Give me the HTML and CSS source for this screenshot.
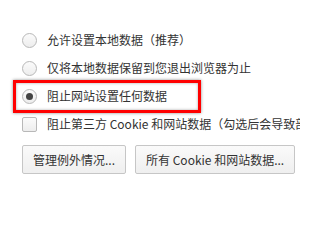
FILE: index.html
```html
<!DOCTYPE html>
<html lang="zh-CN">
<head>
<meta charset="utf-8">
<link rel="stylesheet" href="styles.css">
</head>
<body>
<div class="panel">
  <div class="row"><span class="radio"></span><span class="label">允许设置本地数据（推荐）</span></div>
  <div class="row"><span class="radio"></span><span class="label">仅将本地数据保留到您退出浏览器为止</span></div>
  <div class="row highlighted"><span class="radio checked"></span><span class="label">阻止网站设置任何数据</span><span class="marker"></span></div>
  <div class="row clip"><span class="checkbox"></span><span class="label">阻止第三方 Cookie 和网站数据（勾选后会导致部分网站无法正常使用）</span></div>
  <div class="buttons">
    <button class="btn">管理例外情况...</button>
    <button class="btn">所有 Cookie 和网站数据...</button>
  </div>
</div>
</body>
</html>
```
FILE: styles.css
```css
html, body {
  margin: 0;
  padding: 0;
  background: #ffffff;
  width: 300px;
  height: 200px;
  overflow: hidden;
}
.panel {
  width: 300px;
  box-sizing: border-box;
  overflow: hidden;
  padding: 26px 0 0 22px;
  font-family: "Noto Sans CJK SC", "Noto Sans", sans-serif;
  font-size: 12px;
  color: #333333;
}
.row {
  position: relative;
  display: flex;
  align-items: center;
  height: 28px;
  gap: 10px;
  white-space: nowrap;
}
.row.clip {
  overflow: hidden;
}
.label {
  line-height: 16px;
}
.radio {
  flex: none;
  box-sizing: border-box;
  width: 15px;
  height: 15px;
  border: 1px solid #b8b8b8;
  border-radius: 50%;
  background: linear-gradient(#fbfbfb, #ededed);
  display: flex;
  align-items: center;
  justify-content: center;
}
.radio.checked::after {
  content: "";
  width: 7px;
  height: 7px;
  border-radius: 50%;
  background: #444444;
}
.checkbox {
  flex: none;
  box-sizing: border-box;
  width: 15px;
  height: 15px;
  border: 1px solid #b8b8b8;
  border-radius: 2px;
  background: linear-gradient(#fbfbfb, #ededed);
}
.marker {
  position: absolute;
  left: -9px;
  top: -2px;
  width: 188px;
  height: 33px;
  box-sizing: border-box;
  border: 3px solid #ff0000;
  box-shadow: 0 0 3px rgba(0, 0, 0, 0.45), inset 0 0 3px rgba(0, 0, 0, 0.35);
}
.buttons {
  display: flex;
  gap: 9px;
  margin-top: 7px;
}
.btn {
  height: 29px;
  padding: 0 10px;
  border: 1px solid #c6c6c6;
  border-radius: 2px;
  background: linear-gradient(#fafafa, #efefef);
  font-family: "Noto Sans CJK SC", "Noto Sans", sans-serif;
  font-size: 12px;
  color: #333333;
  white-space: nowrap;
}
```
